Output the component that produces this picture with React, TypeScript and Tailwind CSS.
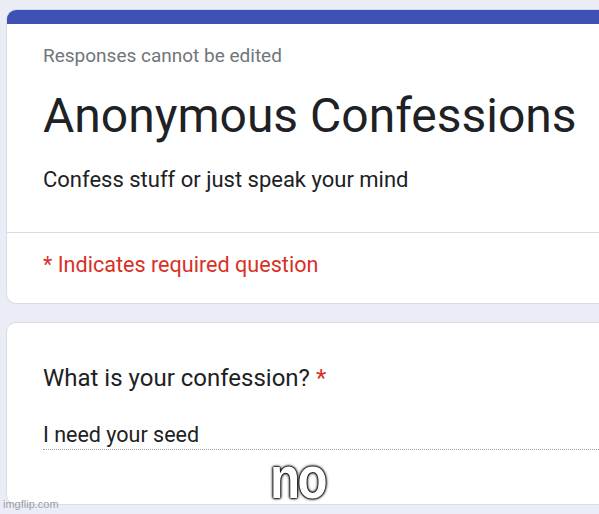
import React from 'react';

const App: React.FC = () => {
  return (
    <div className="relative w-[599px] h-[514px] overflow-hidden bg-[#eaedf6] pl-[6px] pt-[9px] font-['Roboto',sans-serif]">
      <section className="w-[640px] bg-white rounded-[10px] border border-[#dadce0] overflow-hidden">
        <div className="h-[14px] bg-[#3f51b5]"></div>
        <div className="pl-[36px] pt-[20px] pb-[39px]">
          <p className="text-[19px] leading-[24px] text-[#70757a]">Responses cannot be edited</p>
          <h1 className="mt-[20px] text-[48px] leading-[56px] text-[#202124]">Anonymous Confessions</h1>
          <p className="mt-[23px] text-[22px] leading-[26px] text-[#202124]">
            Confess stuff or just speak your mind
          </p>
        </div>
        <div className="border-t border-[#dadce0] pl-[36px] pt-[19px] pb-[25px]">
          <p className="text-[21.6px] leading-[26px] text-[#d93025]">* Indicates required question</p>
        </div>
      </section>

      <section className="mt-[18px] w-[640px] h-[183px] bg-white rounded-[10px] border border-[#dadce0] pl-[36px] pt-[41px]">
        <p className="text-[24px] leading-[28px] text-[#202124]">
          What is your confession? <span className="text-[#d93025]">*</span>
        </p>
        <div className="mt-[30px] border-b border-dotted border-[#9aa0a6] pb-[1px]">
          <p className="text-[21.5px] leading-[26px] text-[#202124]">I need your seed</p>
        </div>
      </section>

      <span className="absolute left-[270px] top-[448px] text-[60px] leading-[60px] font-bold text-white font-['Liberation_Sans',sans-serif] tracking-[-3px] scale-x-[0.82] origin-left [text-shadow:0_0_4px_#000,0_0_3px_#000,0_0_2px_#000,0_0_2px_#000,0_0_1px_#000]">
        no
      </span>

      <span className="absolute left-[3px] top-[497px] text-[11px] leading-[14px] text-[#9aa0a6] font-['Liberation_Sans',sans-serif]">
        imgflip.com
      </span>
    </div>
  );
};

export default App;
